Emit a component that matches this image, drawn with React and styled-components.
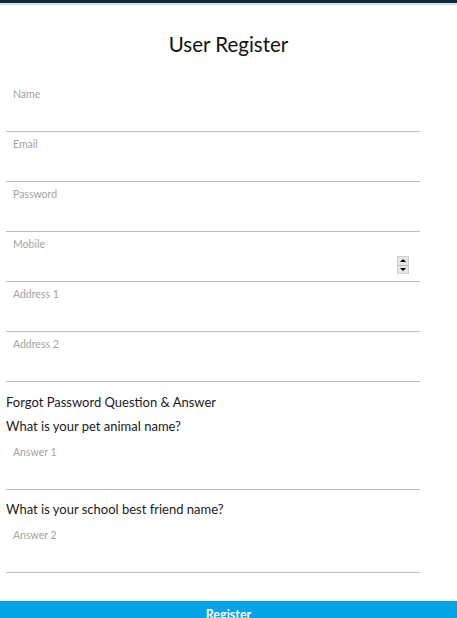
import React from "react";
import styled, {createGlobalStyle} from "styled-components";

const GlobalStyle = createGlobalStyle`
    body{
        margin:0;
        background:#fff;
        font-family:Lato, "Noto Sans", sans-serif;
    }
`

const Page = styled.div`
    width:457px;
    height:618px;
    overflow:hidden;
    display:flex;
    flex-direction:column;
`

const TopBar = styled.div`
    flex:none;
    height:3px;
    background:#0c2a3c;
    border-bottom:1px solid #cfe8f2;
    box-shadow:0 1px 0 #d2d2d2;
`

const Title = styled.h2`
    margin:0;
    padding:25px 0 0;
    height:47px;
    box-sizing:border-box;
    text-align:center;
    font-weight:400;
    font-size:20.5px;
    line-height:30px;
    color:#111;
`

const Form = styled.form`
    width:414px;
    margin:0 0 0 6px;
    padding-top:31px;
    display:flex;
    flex-direction:column;
`

const FieldBox = styled.div`
    position:relative;
    height:49px;
    border-bottom:1px solid #bdbdbd;
    display:flex;
    flex-direction:column;
    margin-top:${p => p.$gap || 0}px;
    label{
        padding:6px 0 0 7px;
        font-size:10.5px;
        line-height:13px;
        color:#a3a3a3;
    }
    input{
        flex:1;
        border:none;
        outline:none;
        background:transparent;
        padding:0 7px;
        font:inherit;
        font-size:13px;
        -moz-appearance:textfield;
    }
    input::-webkit-inner-spin-button,
    input::-webkit-outer-spin-button{
        -webkit-appearance:none;
        margin:0;
    }
`

const Spinner = styled.div`
    position:absolute;
    right:11px;
    top:24px;
    width:10px;
    height:16px;
    border:1px solid #cfcfcf;
    background:#e6e6e6;
    display:flex;
    flex-direction:column;
    span{
        flex:1;
        display:flex;
        align-items:center;
        justify-content:center;
    }
    span + span{
        border-top:1px solid #bdbdbd;
    }
    i{
        width:0;
        height:0;
        border-left:3px solid transparent;
        border-right:3px solid transparent;
    }
    .up i{ border-bottom:3px solid #000; }
    .down i{ border-top:3px solid #000; }
`

const Text = styled.p`
    margin:${p => p.$top || 0}px 0 0;
    font-size:13px;
    line-height:24px;
    color:#1b1b1b;
`

const Button = styled.button`
    margin-top:28px;
    width:457px;
    height:40px;
    flex:none;
    border:none;
    background:#03a3e6;
    color:#fff;
    font-family:inherit;
    font-weight:700;
    font-size:12.5px;
    padding:0 0 16px;
    line-height:28px;
`

const Field = ({label, type = "text", gap, spinner}) => {
    return(
        <FieldBox $gap={gap}>
            <label>{label}</label>
            <input type={type} />
            {spinner && (
                <Spinner>
                    <span className="up"><i /></span>
                    <span className="down"><i /></span>
                </Spinner>
            )}
        </FieldBox>
    )
}

const App = () => {
    return(
        <>
        <GlobalStyle />
        <Page>
            <TopBar />
            <Title>User Register</Title>
            <Form onSubmit={e => e.preventDefault()}>
                <Field label="Name" />
                <Field label="Email" type="email" />
                <Field label="Password" type="password" />
                <Field label="Mobile" type="number" spinner />
                <Field label="Address 1" />
                <Field label="Address 2" />
                <Text $top={8}>Forgot Password Question &amp; Answer</Text>
                <Text>What is your pet animal name?</Text>
                <Field label="Answer 1" gap={2} />
                <Text $top={7}>What is your school best friend name?</Text>
                <Field label="Answer 2" gap={2} />
            </Form>
            <Button>Register</Button>
        </Page>
        </>
    )
}

export default App
